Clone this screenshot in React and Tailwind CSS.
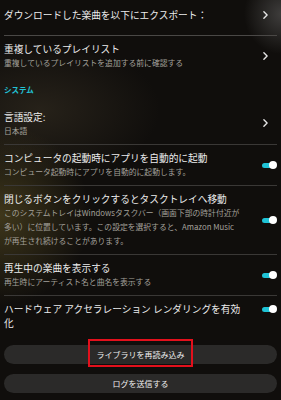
// Settings panel (JP) — dark list of rows with chevrons / toggles + two pill buttons.
const JP = "font-['Noto_Sans_CJK_JP','Noto_Sans',sans-serif]";

function Chevron() {
  return (
    <svg viewBox="0 0 6 10" className="w-[5px] h-[8px] text-[#e6e6e6]" fill="none" stroke="currentColor" strokeWidth="1.7" strokeLinecap="round" strokeLinejoin="round">
      <path d="M1 1l4 4-4 4" />
    </svg>
  );
}

function Toggle() {
  return (
    <span className="relative inline-flex items-center w-[15px] h-[8px]">
      <span className="absolute left-0 right-[2px] h-[5px] rounded-full bg-[#1fc3d6]" />
      <span className="absolute right-0 w-[8px] h-[8px] rounded-full bg-white" />
    </span>
  );
}

function Row({ title, sub, right, divider = true }) {
  return (
    <div className={`flex items-center gap-2 py-[6px] ${divider ? 'border-b border-[#3a3836]' : ''}`}>
      <div className="flex-1 min-w-0">
        <div className="text-[9.7px] leading-[14px] text-[#ececec]">{title}</div>
        {sub && <div className="text-[7.8px] leading-[14px] text-[#a3a09b]">{sub}</div>}
      </div>
      <div className="w-[15px] flex justify-end shrink-0">{right}</div>
    </div>
  );
}

export default function App() {
  return (
    <div
      className={`${JP} w-[281px] h-[400px] overflow-hidden bg-[#100e0c] bg-[radial-gradient(ellipse_38px_40px_at_282px_14px,rgba(150,150,150,0.35),transparent),radial-gradient(ellipse_90px_90px_at_0px_215px,rgba(120,105,45,0.45),transparent),radial-gradient(ellipse_120px_70px_at_40px_110px,rgba(80,70,50,0.35),transparent)]`}
    >
      <div className="px-[4px]">
        <div className="flex items-center gap-2 h-[36px] pb-[6px] border-b border-[#4a4846]">
          <div className="flex-1 text-[9.7px] leading-[14px] text-[#ececec]">ダウンロードした楽曲を以下にエクスポート：</div>
          <div className="w-[15px] flex justify-end shrink-0 pr-[9px]"><Chevron /></div>
        </div>
        <Row
          title="重複しているプレイリスト"
          sub="重複しているプレイリストを追加する前に確認する"
          right={<span className="pr-[9px] flex"><Chevron /></span>}
          divider={false}
        />
        <div className="h-[28px] flex items-center text-[7.5px] font-bold text-[#22c3d6]">システム</div>
        <Row
          title="言語設定:"
          sub="日本語"
          right={<span className="pr-[9px] flex relative -top-[1px]"><Chevron /></span>}
        />
        <Row
          title="コンピュータの起動時にアプリを自動的に起動"
          sub="コンピュータ起動時にアプリを自動的に起動します。"
          right={<Toggle />}
        />
        <Row
          title="閉じるボタンをクリックするとタスクトレイへ移動"
          sub={
            <>
              このシステムトレイはWindowsタスクバー（画面下部の時計付近が
              <br />
              多い）に位置しています。この設定を選択すると、Amazon Music
              <br />
              が再生され続けることがあります。
            </>
          }
          right={<Toggle />}
        />
        <Row
          title="再生中の楽曲を表示する"
          sub="再生時にアーティスト名と曲名を表示する"
          right={<Toggle />}
        />
        <div className="flex items-start gap-2 pt-[6px]">
          <div className="flex-1 text-[9.7px] leading-[14px] text-[#ececec]">
            ハードウェア アクセラレーション レンダリングを有効
            <br />
            化
          </div>
          <div className="w-[15px] flex justify-end shrink-0 pt-[3px]"><Toggle /></div>
        </div>

        <div className="mt-[15px] flex flex-col gap-[10px]">
          <button className="relative h-[19px] w-full rounded-full bg-[#2b2a29] text-[8px] text-[#f0f0f0] flex items-center justify-center">
            <span className="absolute left-[84px] w-[105px] -top-[6px] h-[28px] border-2 border-[#e3101c]" />
            ライブラリを再読み込み
          </button>
          <button className="h-[19px] w-full rounded-full bg-[#2b2a29] text-[8px] text-[#f0f0f0] flex items-center justify-center">
            ログを送信する
          </button>
        </div>
      </div>
    </div>
  );
}
